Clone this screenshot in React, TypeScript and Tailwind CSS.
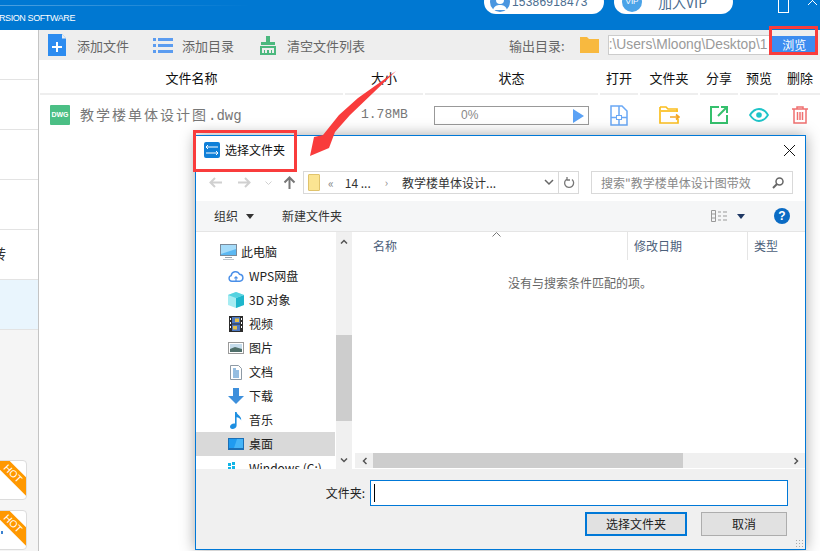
const tableCols = [
  { label: '文件名称', w: 'w-[303px]' },
  { label: '大小', w: 'w-[78px]' },
  { label: '状态', w: 'w-[173px]' },
  { label: '打开', w: 'w-[38px]' },
  { label: '文件夹', w: 'w-[58px]' },
  { label: '分享', w: 'w-[38px]' },
  { label: '预览', w: 'w-[38px]' },
  { label: '删除', w: 'w-[40px]' },
]

function TreeIcon({ name }: { name: string }) {
  if (name === 'pc')
    return (
      <svg width="17" height="16" viewBox="0 0 17 16">
        <rect x="0.5" y="0.5" width="16" height="11" fill="#5cb8f2" stroke="#7b8a99" />
        <path d="M1 1h15v4L1 10z" fill="#a5dcfa" />
        <rect x="5" y="13" width="7" height="1" fill="#99a5ae" />
        <rect x="3" y="15" width="11" height="1" fill="#bcc5cc" />
      </svg>
    )
  if (name === 'cloud')
    return (
      <svg width="17" height="14" viewBox="0 0 17 14" fill="none" stroke="#4a8fe8" strokeWidth="1.5">
        <path d="M4 12.5a3 3 0 0 1-.6-5.9 4.6 4.6 0 0 1 8.8-1.4 3.7 3.7 0 0 1 .8 7.3z" />
        <path d="M8.5 12.5V8M6.8 9.5l1.7-1.7 1.7 1.7" strokeWidth="1.2" />
      </svg>
    )
  if (name === '3d')
    return (
      <svg width="16" height="16" viewBox="0 0 16 16">
        <path d="M8 0l8 3v10l-8 3-8-3V3z" fill="#a6ecf2" />
        <path d="M8 6l8-3v10l-8 3z" fill="#1eb6cc" />
        <path d="M0 3l8 3 8-3-8-3z" fill="#54d2e0" />
      </svg>
    )
  if (name === 'video')
    return (
      <svg width="14" height="16" viewBox="0 0 14 16">
        <rect width="14" height="16" fill="#2c2c2c" />
        <rect x="3" y="1" width="8" height="6.5" fill="#4d78c2" />
        <rect x="3" y="8.5" width="8" height="6.5" fill="#4d78c2" />
        <rect x="6" y="2.5" width="4" height="3.5" fill="#e3c14a" />
        <rect x="4" y="10" width="4" height="3.5" fill="#e3c14a" />
        <path d="M1 2h1v2H1zM1 6h1v2H1zM1 10h1v2H1zM12 2h1v2h-1zM12 6h1v2h-1zM12 10h1v2h-1z" fill="#fff" />
      </svg>
    )
  if (name === 'image')
    return (
      <svg width="16" height="12" viewBox="0 0 16 12">
        <rect x="0.5" y="0.5" width="15" height="11" fill="#fff" stroke="#9a9a9a" />
        <rect x="2" y="2" width="12" height="8" fill="#c5dcec" />
        <path d="M2 7l5-2 7 2v3H2z" fill="#4f6f6a" />
      </svg>
    )
  if (name === 'doc')
    return (
      <svg width="12" height="15" viewBox="0 0 12 15">
        <path d="M.5.5h8l3 3v11H.5z" fill="#fff" stroke="#8e9aa5" />
        <path d="M3 4h3M3 6h6M3 8h6M3 10h6M3 12h6" stroke="#2d7dc2" />
      </svg>
    )
  if (name === 'down')
    return (
      <svg width="16" height="16" viewBox="0 0 16 16">
        <path d="M5 0h6v8h5l-8 8-8-8h5z" fill="#3d8fdc" />
      </svg>
    )
  if (name === 'music')
    return (
      <svg width="12" height="17" viewBox="0 0 12 17">
        <path d="M5 0h1.6c.3 3 5 3.5 4.6 8.5C10.500 6.500 8.500 5.500 6.600 5.200V13.500c0 2-2 3.500-4.200 3.500C.8 17 0 16 0 14.800 0 13 2 11.500 4 11.500c.4 0 .7 0 1 .1z" fill="#1d8fe1" />
      </svg>
    )
  if (name === 'desktop')
    return (
      <svg width="16" height="12" viewBox="0 0 16 12">
        <rect width="16" height="12" fill="#1c6fb5" />
        <rect x="1" y="1" width="14" height="9" fill="#1f9bf0" />
        <path d="M9 1h6v9H6z" fill="#45b4f7" />
      </svg>
    )
  return (
    <svg width="16" height="12" viewBox="0 0 16 12">
      <path d="M0 1h3v3H0zM4 0h3v3H4zM0 5h3v3H0zM4 4h3v3H4zM4 8h3v3H4z" fill="#10b4e6" />
      <rect x="8" y="8" width="8" height="2" fill="#bbb" />
    </svg>
  )
}

const treeItems = [
  { icon: 'cloud', label: 'WPS网盘' },
  { icon: '3d', label: '3D 对象' },
  { icon: 'video', label: '视频' },
  { icon: 'image', label: '图片' },
  { icon: 'doc', label: '文档' },
  { icon: 'down', label: '下载' },
  { icon: 'music', label: '音乐' },
  { icon: 'desktop', label: '桌面', active: true },
  { icon: 'win', label: 'Windows (C:)' },
]

function HotCard({ dot }: { dot?: boolean }) {
  return (
    <div className="relative h-[40px] w-[40px] -ml-[13px] rounded border border-[#dcdcdc] bg-white overflow-hidden shrink-0">
      <div className="absolute -right-[17px] top-[6px] w-[60px] h-[13px] rotate-45 bg-[#ff9800] text-white text-[10px] leading-[13px] text-center font-['Liberation_Sans',sans-serif]">
        HOT
      </div>
      {dot && <div className="absolute left-[13px] top-[20px] h-[3px] w-[2px] bg-[#3b82d0]" />}
    </div>
  )
}

export default function App() {
  return (
    <div className="relative w-[820px] h-[551px] overflow-hidden bg-white text-[13px] text-[#222] font-['Noto_Sans_CJK_SC','Liberation_Sans',sans-serif]">
      {/* top bar */}
      <header className="relative h-[30px] bg-[#0078d2] text-white overflow-hidden">
        <div className="absolute left-0 top-[5px] h-px w-[250px] bg-gradient-to-r from-white/30 to-transparent" />
        <span className="absolute right-[745px] top-[11px] whitespace-nowrap text-[9px] leading-[15px] tracking-[-0.4px] font-['Liberation_Sans',sans-serif]">
          CONVERSION SOFTWARE
        </span>
        <div className="absolute left-[484px] -top-[10px] flex h-[24px] w-[120px] items-center rounded-full bg-white pl-[6px] text-[#4a6d8f]">
          <svg width="20" height="20" viewBox="0 0 20 20">
            <circle cx="10" cy="10" r="10" fill="#4a96e0" />
            <circle cx="10" cy="8" r="4" fill="#fff" />
            <path d="M3 18c1-4 4-5 7-5s6 1 7 5z" fill="#fff" />
          </svg>
          <span className="ml-[2px] text-[12px] tracking-[0.2px] font-['Liberation_Sans',sans-serif]">15386918473</span>
        </div>
        <div className="absolute left-[614px] -top-[10px] flex h-[24px] w-[119px] items-center rounded-full bg-white pl-[8px] text-[#4a6d8f]">
          <div className="flex h-[20px] w-[20px] items-center justify-center rounded-full bg-[#4aa3e8] text-[8px] text-white font-['Liberation_Sans',sans-serif]">VIP</div>
          <span className="ml-[16px] text-[14px]">加入VIP</span>
        </div>
        <div className="absolute left-[778px] top-0 h-[13px] w-[11px] border-b border-x border-white" />
        <svg className="absolute left-[808px] -top-[4px]" width="10" height="9" viewBox="0 0 10 9" stroke="#fff" fill="none">
          <path d="M0 0l9 9M9 0L0 9" />
        </svg>
      </header>

      <div className="flex h-[521px]">
        {/* left rail */}
        <aside className="flex w-[39px] shrink-0 flex-col border-r border-[#c4c4c4] bg-[#f5f5f5]">
          <div className="h-[50px] bg-white border-b border-[#e3e3e3]" />
          <div className="h-[50px] bg-white border-b border-[#e3e3e3]" />
          <div className="h-[50px] bg-white border-b border-[#e3e3e3]" />
          <div className="h-[50px] bg-white border-b border-[#e3e3e3]" />
          <div className="h-[50px] bg-white border-b border-[#e3e3e3] flex items-center overflow-hidden pb-[2px]">
            <span className="-ml-[8px] text-[14px] text-[#333]">转</span>
          </div>
          <div className="h-[50px] bg-[#e9f5fd] border-b border-[#e3e3e3]" />
          <div className="flex flex-col gap-[10px] pt-[130px]">
            <HotCard />
            <HotCard dot />
          </div>
        </aside>

        <main className="flex-1 min-w-0">
          {/* toolbar */}
          <div className="flex h-[30px] items-center bg-[#eeeeee] text-[#666]">
            <svg className="ml-[9px]" width="18" height="22" viewBox="0 0 18 22">
              <path d="M0 0h14l4 4.500V22H0z" fill="#2d8cf0" />
              <path d="M14 0l4 4.500h-4z" fill="#eeeeee" />
              <path d="M8 9h2v4h4v2h-4v4H8v-4H4v-2h4z" fill="#fff" transform="translate(0 -1)" />
            </svg>
            <span className="ml-[11px] pt-[1px]">添加文件</span>
            <svg className="ml-[24px]" width="20" height="15" viewBox="0 0 20 15" fill="#5b9cf0">
              <path d="M0 0h3v3H0zM5 0h15v3H5zM0 6h3v3H0zM5 6h15v3H5zM0 12h3v3H0zM5 12h15v3H5z" />
            </svg>
            <span className="ml-[9px] pt-[1px]">添加目录</span>
            <svg className="ml-[25px]" width="18" height="19" viewBox="0 0 18 19" fill="#4cb87e">
              <path d="M7 0h4v6h5v3H2V6h5z" />
              <path d="M1 10h16v9H1zM3 12v5h2v-3h1v3h2v-3h2v3h2v-3h1v3h2v-5z" fillRule="evenodd" />
            </svg>
            <span className="ml-[10px] pt-[1px]">清空文件列表</span>
            <span className="ml-[144px] pt-[1px]">输出目录:</span>
            <svg className="ml-[15px]" width="19" height="16" viewBox="0 0 19 16">
              <path d="M0 0h7l2 2h10v14H0z" fill="#f8b93f" />
            </svg>
            <div className="ml-[9px] h-[20px] w-[163px] overflow-hidden border border-[#cccccc] bg-white text-[13.8px] leading-[18px] text-[#9a9a9a] whitespace-nowrap font-['Liberation_Sans',sans-serif]">
              :\Users\Mloong\Desktop\1
            </div>
            <div className="flex h-[19px] w-[47px] items-center justify-center bg-[#3c8cf0] text-[12px] text-white">浏览</div>
          </div>

          {/* table header */}
          <div className="flex h-[35px] gap-[2px] pl-[1px] text-[#111]">
            {tableCols.map((c) => (
              <div key={c.label} className={`${c.w} flex h-[35px] shrink-0 items-center justify-center border-b-2 border-[#eeeeee] pt-[3px]`}>
                {c.label}
              </div>
            ))}
          </div>

          {/* file row */}
          <div className="flex h-[40px] items-center gap-[2px] pl-[1px] text-[#777]">
            <div className="flex w-[303px] shrink-0 items-center pl-[10px]">
              <div className="flex h-[20px] w-[20px] items-center justify-center rounded-[1px] bg-[#4bbf85] text-[7px] font-bold text-white font-['Liberation_Sans',sans-serif]">DWG</div>
              <span className="ml-[10px] text-[14px] tracking-[2px]">教学楼单体设计图<span className="font-['Liberation_Mono',monospace] tracking-normal">.dwg</span></span>
            </div>
            <div className="w-[78px] shrink-0 pl-[16px] text-[13px] font-['Liberation_Mono',monospace]">1.78MB</div>
            <div className="flex w-[173px] shrink-0 justify-center">
              <div className="relative flex h-[19px] w-[155px] items-center border border-[#999] pl-[26px] text-[12px] text-[#888] font-['Liberation_Sans',sans-serif]">
                0%
                <div className="absolute right-[4px] top-[2px] h-0 w-0 border-y-[7px] border-l-[11px] border-y-transparent border-l-[#5ba2f5]" />
              </div>
            </div>
            <div className="flex w-[38px] shrink-0 justify-center">
              <svg width="18" height="21" viewBox="0 0 18 21" fill="none" stroke="#6aa8f5" strokeWidth="1.500">
                <path d="M1 1h11l5 5v14H1zM9 1v10M9 14v6M1 12.500h5M12 12.500h5" />
                <rect x="6.500" y="10.500" width="5" height="4" strokeWidth="1" />
              </svg>
            </div>
            <div className="flex w-[58px] shrink-0 justify-center">
              <svg width="21" height="18" viewBox="0 0 21 18" fill="none" stroke="#fbbf1f" strokeWidth="1.700">
                <path d="M1 1h6l2 2h9v3M1 1v16h18v-4" />
                <path d="M2 5h17" />
                <path d="M11 11h9M17 8.500l3 2.500-3 2.500" stroke="#f5a623" />
              </svg>
            </div>
            <div className="flex w-[38px] shrink-0 justify-center">
              <svg width="18" height="18" viewBox="0 0 18 18" fill="none" stroke="#35c06d" strokeWidth="2">
                <path d="M9 1H1v16h16V9M8 10l8-8M11 1h6v6" />
              </svg>
            </div>
            <div className="flex w-[38px] shrink-0 justify-center">
              <svg width="20" height="14" viewBox="0 0 20 14" fill="none" stroke="#1fc4c8" strokeWidth="1.800">
                <path d="M1 7c2.500-4 5.500-6 9-6s6.500 2 9 6c-2.500 4-5.500 6-9 6s-6.500-2-9-6z" />
                <circle cx="10" cy="7" r="2.800" fill="#1fc4c8" stroke="none" />
              </svg>
            </div>
            <div className="flex w-[40px] shrink-0 justify-center">
              <svg width="16" height="18" viewBox="0 0 16 18" fill="none" stroke="#f07070" strokeWidth="1.500">
                <path d="M0 3h16M5 3V1h6v2M2 3v14h12V3M5.500 6v8M8 6v8M10.500 6v8" />
              </svg>
            </div>
          </div>
        </main>
      </div>

      {/* red arrow */}
      <svg className="absolute left-[300px] top-[60px] z-20" width="110" height="110" viewBox="300 60 110 110">
        <path d="M396 71L350 115L335 132L329 148L310 156L314 137L323 135L339 115L358 98z" fill="#f93c3c" />
      </svg>

      {/* red markers */}
      <div className="absolute left-[193px] top-[130px] z-20 h-[42px] w-[104px] border-[3px] border-[#f93c3c]" />
      <div className="absolute left-[769px] top-[26px] z-20 h-[29px] w-[49px] border-[3px] border-[#f93c3c]" />

      {/* folder picker dialog */}
      <div className="absolute left-[195px] top-[135px] z-10 flex h-[415px] w-[611px] flex-col border border-[#0078d7] bg-white shadow-[0_0_14px_rgba(0,0,0,0.35)]">
        <div className="flex h-[28px] shrink-0 items-center pl-[8px]">
          <svg width="16" height="16" viewBox="0 0 16 16">
            <rect width="16" height="16" rx="2" fill="#0f7fd8" />
            <path d="M2 5h12M4 3L2 5l2 2M14 11H2M12 9l2 2-2 2" stroke="#fff" fill="none" />
          </svg>
          <span className="ml-[5px] text-[12px] text-[#111]">选择文件夹</span>
          <svg className="ml-auto mr-[10px]" width="11" height="11" viewBox="0 0 11 11" stroke="#111" fill="none">
            <path d="M0 0l11 11M11 0L0 11" />
          </svg>
        </div>

        <div className="flex h-[37px] shrink-0 items-center">
          <svg className="ml-[13px]" width="13" height="11" viewBox="0 0 13 11" fill="none" stroke="#d0d0d0" strokeWidth="2">
            <path d="M13 5.500H2M6 1L1.500 5.500 6 10" />
          </svg>
          <svg className="ml-[16px]" width="13" height="11" viewBox="0 0 13 11" fill="none" stroke="#d0d0d0" strokeWidth="2">
            <path d="M0 5.500h11M7 1l4.500 4.500L7 10" />
          </svg>
          <svg className="ml-[14px]" width="7" height="4" viewBox="0 0 7 4" fill="none" stroke="#d0d0d0">
            <path d="M.5.500l3 3 3-3" />
          </svg>
          <svg className="ml-[11px]" width="13" height="13" viewBox="0 0 13 13" fill="none" stroke="#777" strokeWidth="2">
            <path d="M6.500 13V2M1.500 6.500l5-5 5 5" />
          </svg>
          <div className="ml-[7px] flex h-[23px] w-[276px] items-center border border-[#d9d9d9] text-[#333]">
            <div className="ml-[4px] h-[17px] w-[12px] rounded-[1px] border border-[#e0c36c] bg-[#fbe492]" />
            <span className="ml-[8px] text-[#888] text-[12px]">«</span>
            <span className="ml-[11px] text-[12px]">14 ...</span>
            <span className="ml-[14px] text-[#888] text-[11px]">›</span>
            <span className="ml-[14px] text-[12px]">教学楼单体设计...</span>
            <svg className="ml-auto mr-[4px]" width="10" height="7" viewBox="0 0 10 7" fill="none" stroke="#666" strokeWidth="1.500">
              <path d="M1 1l4 4 4-4" />
            </svg>
            <div className="flex h-full w-[20px] items-center justify-center border-l border-[#d9d9d9]">
              <svg width="12" height="12" viewBox="0 0 12 12" fill="none" stroke="#777" strokeWidth="1.300">
                <path d="M9 2.500A4.500 4.500 0 1 1 4 2M4 0v3h3" />
              </svg>
            </div>
          </div>
          <div className="ml-[12px] flex h-[23px] w-[202px] items-center border border-[#d9d9d9] pl-[9px] text-[12px] text-[#888]">
            搜索"教学楼单体设计图带效
            <svg className="ml-auto mr-[8px]" width="12" height="12" viewBox="0 0 12 12" fill="none" stroke="#666" strokeWidth="1.500">
              <circle cx="7.500" cy="4.500" r="3.500" />
              <path d="M5 7l-4 4" strokeWidth="2" />
            </svg>
          </div>
        </div>

        <div className="flex h-[31px] shrink-0 items-center border-b border-[#e5e5e5] bg-[#f5f6f7] text-[12px] text-[#333]">
          <span className="ml-[18px]">组织</span>
          <div className="ml-[8px] h-0 w-0 border-x-[4px] border-t-[5px] border-x-transparent border-t-[#333]" />
          <span className="ml-[28px]">新建文件夹</span>
          <svg className="ml-auto" width="17" height="12" viewBox="0 0 17 12" fill="none" stroke="#999">
            <path d="M.5.5h4v11h-4zM.5 4h4M.5 8h4M7 2h3M12 2h4M7 6h3M12 6h4M7 10h3M12 10h4" />
          </svg>
          <div className="ml-[9px] h-0 w-0 border-x-[4px] border-t-[5px] border-x-transparent border-t-[#1f3864]" />
          <div className="ml-[29px] mr-[15px] flex h-[16px] w-[16px] items-center justify-center rounded-full bg-[#0a6bc4] text-[12px] font-bold text-white font-['Liberation_Sans',sans-serif]">?</div>
        </div>

        <div className="flex h-[237px] shrink-0 overflow-hidden">
          {/* folder tree */}
          <div className="flex w-[140px] shrink-0 flex-col overflow-hidden pt-[8px] pr-[1px] text-[12px] text-[#222]">
            <div className="flex h-[24px] shrink-0 items-center gap-[4px] pl-[24px]">
              <TreeIcon name="pc" />
              此电脑
            </div>
            {treeItems.map((t) => (
              <div key={t.label} className={`flex h-[24px] shrink-0 items-center pl-[32px] ${t.active ? 'bg-[#d9d9d9]' : ''}`}>
                <div className="flex w-[16px] justify-center"><TreeIcon name={t.icon} /></div>
                <span className="ml-[5px] whitespace-nowrap">{t.label}</span>
              </div>
            ))}
          </div>
          {/* tree scrollbar */}
          <div className="flex w-[16px] shrink-0 flex-col bg-[#f0f0f0]">
            <div className="flex h-[18px] items-center justify-center">
              <svg width="8" height="5" viewBox="0 0 8 5" fill="none" stroke="#555" strokeWidth="1.500"><path d="M1 4.500l3-3 3 3" /></svg>
            </div>
            <div className="mt-[85px] h-[86px] bg-[#cdcdcd]" />
            <div className="mt-auto flex h-[17px] items-center justify-center">
              <svg width="8" height="5" viewBox="0 0 8 5" fill="none" stroke="#555" strokeWidth="1.500"><path d="M1 .500l3 3 3-3" /></svg>
            </div>
          </div>
          {/* results list */}
          <div className="flex min-w-0 flex-1 flex-col pl-[3px]">
            <div className="relative flex h-[28px] shrink-0 text-[12px] text-[#4c607a]">
              <div className="w-[273px] border-r border-[#e5e5e5] pl-[18px] leading-[27px]">名称</div>
              <div className="w-[120px] border-r border-[#e5e5e5] pl-[6px] leading-[27px]">修改日期</div>
              <div className="pl-[6px] leading-[27px]">类型</div>
              <svg className="absolute left-[137px] top-0" width="9" height="5" viewBox="0 0 9 5" fill="none" stroke="#777"><path d="M.5 4.500l4-4 4 4" /></svg>
            </div>
            <p className="pt-[14px] pl-[153px] text-[12px] text-[#666]">没有与搜索条件匹配的项。</p>
            <div className="mt-auto flex h-[15px] items-center bg-[#f0f0f0] mb-[1px]">
              <div className="flex w-[18px] shrink-0 justify-center">
                <svg width="5" height="8" viewBox="0 0 5 8" fill="none" stroke="#555" strokeWidth="1.500"><path d="M4.500 1l-3 3 3 3" /></svg>
              </div>
              <div className="h-[15px] w-[310px] bg-[#cdcdcd]" />
              <div className="ml-auto flex w-[17px] justify-center">
                <svg width="5" height="8" viewBox="0 0 5 8" fill="none" stroke="#555" strokeWidth="1.500"><path d="M.5 1l3 3-3 3" /></svg>
              </div>
            </div>
          </div>
        </div>

        {/* footer */}
        <div className="relative flex-1 bg-[#f0f0f0]">
          <div className="flex items-center justify-end pt-[11px] pr-[17px]">
            <span className="mr-[5px] text-[12px] text-[#222]">文件夹:</span>
            <div className="flex h-[26px] w-[418px] items-center border border-[#0078d7] bg-white pl-[3px]">
              <div className="h-[18px] w-px bg-black" />
            </div>
          </div>
          <div className="flex justify-end gap-[14px] pt-[6px] pr-[18px]">
            <button className="h-[24px] w-[102px] border-[2px] border-[#0078d7] bg-[#e1e1e1] text-[12px] text-[#222]">选择文件夹</button>
            <button className="h-[24px] w-[86px] border border-[#adadad] bg-[#e1e1e1] text-[12px] text-[#222]">取消</button>
          </div>
          <div className="absolute bottom-[1px] right-[1px] h-[9px] w-[9px] bg-[radial-gradient(#aaa_1px,transparent_1px)] bg-[length:3px_3px]" />
        </div>
      </div>
    </div>
  )
}
